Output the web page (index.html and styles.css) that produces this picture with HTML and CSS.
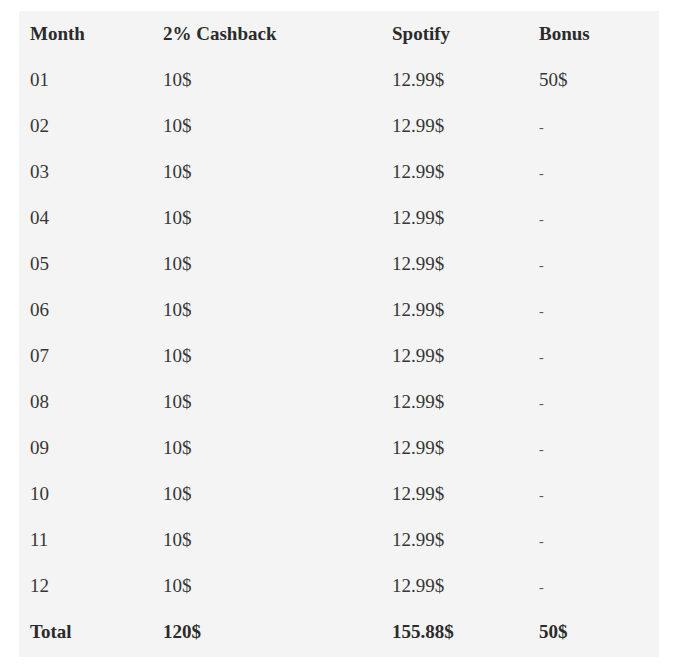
FILE: index.html
```html
<!DOCTYPE html>
<html>
<head>
<meta charset="utf-8">
<link rel="stylesheet" href="styles.css">
</head>
<body>
<div class="wrap">
<table class="tbl">
<colgroup><col class="c1"><col class="c2"><col class="c3"><col class="c4"></colgroup>
<thead>
<tr><th>Month</th><th>2% Cashback</th><th>Spotify</th><th>Bonus</th></tr>
</thead>
<tbody>
<tr><td>01</td><td>10$</td><td>12.99$</td><td>50$</td></tr>
<tr><td>02</td><td>10$</td><td>12.99$</td><td class="dash">-</td></tr>
<tr><td>03</td><td>10$</td><td>12.99$</td><td class="dash">-</td></tr>
<tr><td>04</td><td>10$</td><td>12.99$</td><td class="dash">-</td></tr>
<tr><td>05</td><td>10$</td><td>12.99$</td><td class="dash">-</td></tr>
<tr><td>06</td><td>10$</td><td>12.99$</td><td class="dash">-</td></tr>
<tr><td>07</td><td>10$</td><td>12.99$</td><td class="dash">-</td></tr>
<tr><td>08</td><td>10$</td><td>12.99$</td><td class="dash">-</td></tr>
<tr><td>09</td><td>10$</td><td>12.99$</td><td class="dash">-</td></tr>
<tr><td>10</td><td>10$</td><td>12.99$</td><td class="dash">-</td></tr>
<tr><td>11</td><td>10$</td><td>12.99$</td><td class="dash">-</td></tr>
<tr><td>12</td><td>10$</td><td>12.99$</td><td class="dash">-</td></tr>
<tr class="total"><td>Total</td><td>120$</td><td>155.88$</td><td>50$</td></tr>
</tbody>
</table>
</div>
</body>
</html>
```
FILE: styles.css
```css
html, body {
  margin: 0;
  padding: 0;
  background: #ffffff;
}
.wrap {
  padding: 11px 14px 0 19px;
}
.tbl {
  width: 640px;
  border-collapse: collapse;
  table-layout: fixed;
  background: #f4f4f4;
  font-family: "Liberation Serif", "DejaVu Serif", serif;
  font-size: 19px;
  color: #333333;
}
.c1 { width: 133px; }
.c2 { width: 229px; }
.c3 { width: 147px; }
.c4 { width: 131px; }
.tbl th, .tbl td {
  height: 46px;
  padding: 0 0 0 11px;
  text-align: left;
  vertical-align: middle;
  box-sizing: border-box;
}
.tbl th {
  font-weight: bold;
  color: #2b2b2b;
}
.tbl td {
  font-weight: normal;
  color: #363636;
}
.tbl .total td {
  height: 48px;
  padding-bottom: 2px;
  font-weight: bold;
  color: #2b2b2b;
}
.dash {
  font-size: 14px;
  padding-top: 4px !important;
  color: #555555 !important;
}
```
